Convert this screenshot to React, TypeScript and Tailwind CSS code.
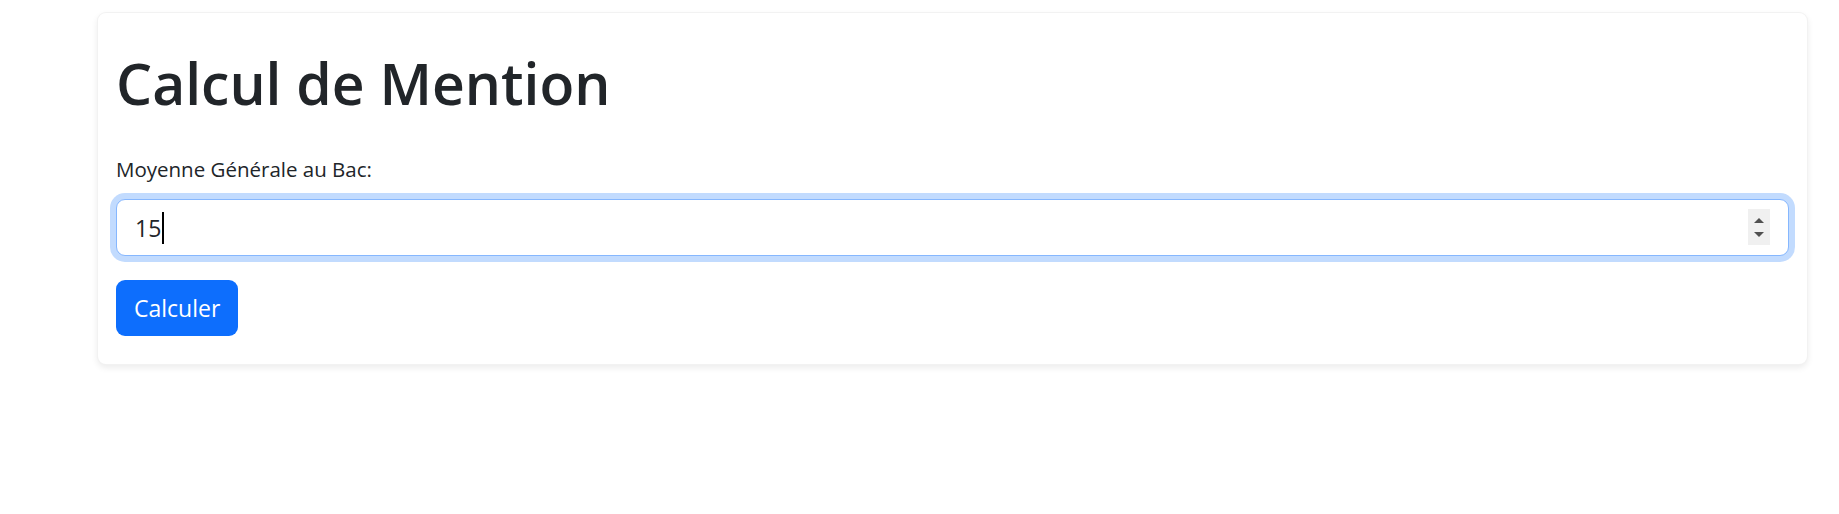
export default function App() {
  return (
    <div
      className="min-h-screen bg-white pl-[97px] pr-[31px] pt-[12px] text-[#212529]"
      style={{ fontFamily: '"Segoe UI", "Open Sans", "Noto Sans", Arial, sans-serif' }}
    >
      <div className="rounded-[9px] border border-black/[0.05] bg-white px-[18px] pt-[36px] pb-[28px] shadow-[0_3px_6px_rgba(0,0,0,0.075)]">
        <h1 className="mb-[34px] text-[57px] font-semibold leading-[1.2]">Calcul de Mention</h1>

        <label className="mb-[12px] inline-block text-[20.5px] leading-[36px]">
          Moyenne Générale au Bac:
        </label>

        <div className="relative mb-[24px] flex h-[57px] items-center rounded-[9px] border border-[#86b7fe] bg-white px-[18px] text-[23px] shadow-[0_0_0_6px_rgba(13,110,253,0.25)]">
          <span>15</span>
          <span className="ml-[1px] h-[32px] w-[2px] bg-black" />
          <div className="absolute right-[18px] top-[9px] flex h-[36px] w-[22px] flex-col items-center justify-center gap-[9px] bg-[#f0f0f0]">
            <svg width="10" height="5" viewBox="0 0 10 5">
              <path d="M0 5 L5 0 L10 5 Z" fill="#505050" />
            </svg>
            <svg width="10" height="5" viewBox="0 0 10 5">
              <path d="M0 0 L10 0 L5 5 Z" fill="#505050" />
            </svg>
          </div>
        </div>

        <button className="rounded-[9px] bg-[#0d6efd] px-[18px] py-[9px] text-[23px] leading-[38px] text-white">
          Calculer
        </button>
      </div>
    </div>
  );
}
